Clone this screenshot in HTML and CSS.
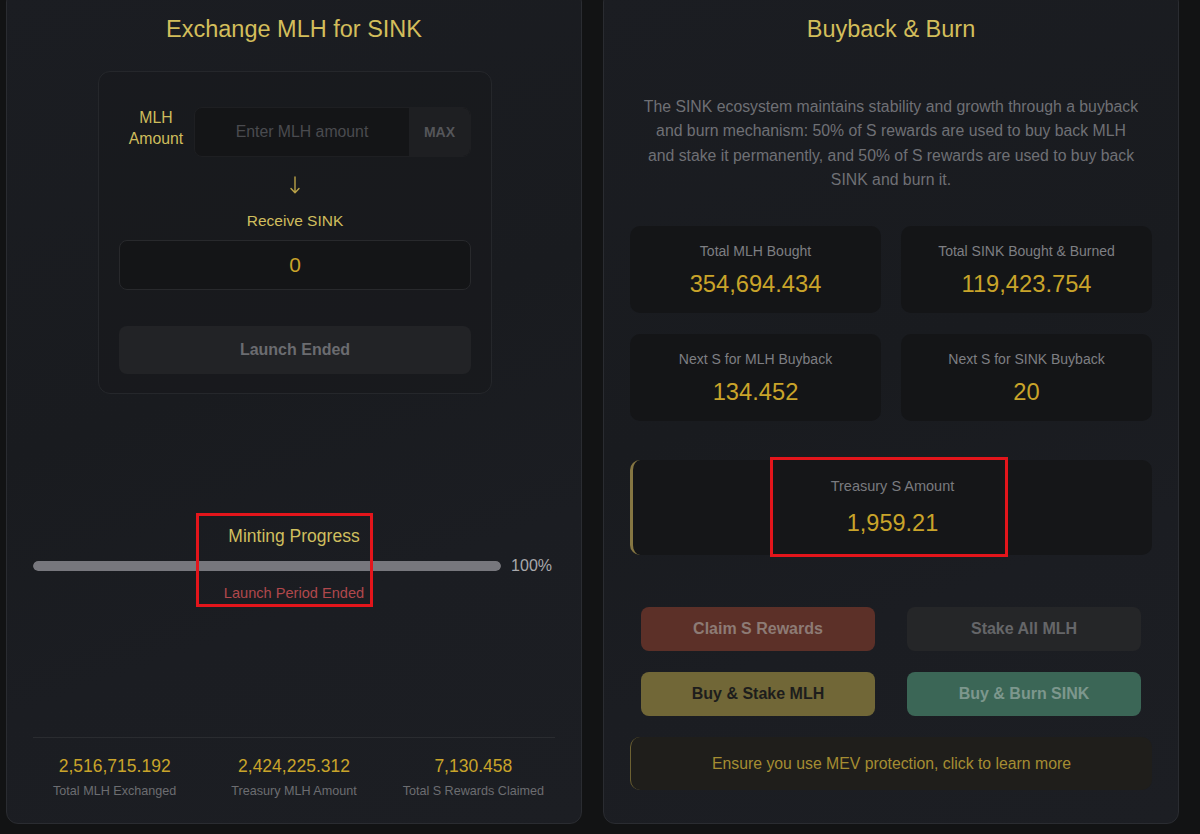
FILE: index.html
```html
<!DOCTYPE html>
<html lang="en">
<head>
<meta charset="utf-8">
<title>SINK</title>
<link rel="stylesheet" href="styles.css">
</head>
<body>
<div class="page">
  <section class="panel">
    <h2 class="title">Exchange MLH for SINK</h2>
    <div class="swap-box">
      <div class="input-row">
        <label class="amount-label" for="mlh">MLH Amount</label>
        <div class="input-wrap">
          <input id="mlh" class="amount-input" type="text" placeholder="Enter MLH amount">
          <button class="max-btn">MAX</button>
        </div>
      </div>
      <div class="arrow" aria-label="down">
        <svg width="12" height="18" viewBox="0 0 12 18"><path d="M6 1 V16.5 M2 12.5 L6 16.8 L10 12.5" fill="none" stroke="#b9a248" stroke-width="1.4" stroke-linecap="round" stroke-linejoin="round"/></svg>
      </div>
      <div class="receive-label">Receive SINK</div>
      <div class="output-box">0</div>
      <button class="launch-btn">Launch Ended</button>
    </div>
    <div class="progress">
      <div class="progress-title">Minting Progress</div>
      <div class="bar-row">
        <div class="bar"><div class="bar-fill" style="width:100%"></div></div>
        <span class="pct">100%</span>
      </div>
      <div class="progress-status">Launch Period Ended</div>
    </div>
    <div class="stats">
      <div class="stats-grid">
        <div class="stat">
          <div class="stat-value">2,516,715.192</div>
          <div class="stat-label">Total MLH Exchanged</div>
        </div>
        <div class="stat">
          <div class="stat-value">2,424,225.312</div>
          <div class="stat-label">Treasury MLH Amount</div>
        </div>
        <div class="stat">
          <div class="stat-value">7,130.458</div>
          <div class="stat-label">Total S Rewards Claimed</div>
        </div>
      </div>
    </div>
  </section>

  <section class="panel">
    <h2 class="title">Buyback &amp; Burn</h2>
    <p class="desc">The SINK ecosystem maintains stability and growth through a buyback and burn mechanism: 50% of S rewards are used to buy back MLH and stake it permanently, and 50% of S rewards are used to buy back SINK and burn it.</p>
    <div class="cards">
      <div class="card">
        <div class="card-label">Total MLH Bought</div>
        <div class="card-value">354,694.434</div>
      </div>
      <div class="card">
        <div class="card-label">Total SINK Bought &amp; Burned</div>
        <div class="card-value">119,423.754</div>
      </div>
      <div class="card">
        <div class="card-label">Next S for MLH Buyback</div>
        <div class="card-value">134.452</div>
      </div>
      <div class="card">
        <div class="card-label">Next S for SINK Buyback</div>
        <div class="card-value">20</div>
      </div>
    </div>
    <div class="treasury">
      <div class="treasury-label">Treasury S Amount</div>
      <div class="treasury-value">1,959.21</div>
    </div>
    <div class="actions">
      <button class="act act-claim">Claim S Rewards</button>
      <button class="act act-stake">Stake All MLH</button>
      <button class="act act-buy">Buy &amp; Stake MLH</button>
      <button class="act act-burn">Buy &amp; Burn SINK</button>
    </div>
    <div class="mev">Ensure you use MEV protection, click to learn more</div>
  </section>
</div>
<div class="annot annot-1"></div>
<div class="annot annot-2"></div>
</body>
</html>
```

FILE: styles.css
```css
html, body {
  margin: 0;
  padding: 0;
}

body {
  background: #121314;
  font-family: "Liberation Sans", Arial, sans-serif;
  overflow: hidden;
  position: relative;
  height: 834px;
}

.page {
  display: grid;
  grid-template-columns: 1fr 1fr;
  gap: 21px;
  padding: 0 21px 0 6px;
  height: 834px;
  margin-top: -10px;
  box-sizing: border-box;
}

.panel {
  background: linear-gradient(160deg, #1b1d22 0%, #191b1f 45%, #1b1d22 70%, #1c1e23 100%);
  border: 1px solid #2a2c31;
  border-radius: 12px;
  padding: 23px 26px 23px;
  display: flex;
  flex-direction: column;
  box-sizing: border-box;
  min-width: 0;
}

.title {
  margin: 0;
  text-align: center;
  font-size: 23.5px;
  line-height: 30px;
  font-weight: normal;
  color: #d3be5b;
}

/* ---------- swap box ---------- */
.swap-box {
  width: 394px;
  margin: 27px auto 0;
  box-sizing: border-box;
  padding: 35px 20px 19px;
  border: 1px solid #25272b;
  border-radius: 12px;
  background: rgba(22, 23, 26, 0.35);
  display: flex;
  flex-direction: column;
  position: relative;
  left: 1px;
}

.input-row {
  display: flex;
  align-items: flex-start;
  gap: 1px;
}

.amount-label {
  width: 74px;
  flex: none;
  text-align: center;
  font-size: 15.8px;
  line-height: 21px;
  color: #cfbd5c;
}

.input-wrap {
  flex: 1;
  height: 50px;
  display: flex;
  background: #141517;
  border: 1px solid #1e1f22;
  border-radius: 8px;
  overflow: hidden;
  box-sizing: border-box;
}

.amount-input {
  flex: 1;
  min-width: 0;
  background: transparent;
  border: none;
  outline: none;
  text-align: center;
  font-family: "Liberation Sans", Arial, sans-serif;
  font-size: 15.8px;
  color: #cfbd5c;
  padding: 0;
}

.amount-input::placeholder {
  color: #4a4b4f;
}

.max-btn {
  width: 61px;
  flex: none;
  background: #1e1f22;
  border: none;
  color: #55565a;
  font-family: "Liberation Sans", Arial, sans-serif;
  font-weight: bold;
  font-size: 14px;
  padding: 0;
}

.arrow {
  margin-top: 16px;
  height: 24px;
  display: flex;
  align-items: center;
  justify-content: center;
}

.arrow svg {
  display: block;
}

.receive-label {
  margin-top: 14px;
  text-align: center;
  font-size: 15.5px;
  line-height: 20px;
  color: #d0be5d;
}

.output-box {
  margin-top: 9px;
  height: 50px;
  box-sizing: border-box;
  border: 1px solid #28292c;
  background: #141517;
  border-radius: 8px;
  display: flex;
  align-items: center;
  justify-content: center;
  font-size: 21px;
  color: #c9a42a;
}

.launch-btn {
  margin-top: 36px;
  height: 48px;
  width: 100%;
  background: #222326;
  border: none;
  border-radius: 8px;
  color: #6b6c70;
  font-family: "Liberation Sans", Arial, sans-serif;
  font-weight: bold;
  font-size: 16px;
}

/* ---------- progress ---------- */
.progress {
  margin-top: 130px;
}

.progress-title {
  text-align: center;
  font-size: 17.5px;
  line-height: 24px;
  color: #d0bf5e;
}

.bar-row {
  margin-top: 8px;
  height: 20px;
  display: flex;
  align-items: center;
  gap: 10px;
  padding-right: 3px;
}

.bar {
  flex: 1;
  height: 10px;
  border-radius: 5px;
  background: #2a2b2f;
  overflow: hidden;
}

.bar-fill {
  height: 100%;
  background: #77777d;
  border-radius: 5px;
}

.pct {
  font-size: 16px;
  color: #a8a8ac;
}

.progress-status {
  margin-top: 7px;
  text-align: center;
  font-size: 14.6px;
  line-height: 20px;
  color: #b0484c;
}

/* ---------- stats ---------- */
.stats {
  margin-top: auto;
  border-top: 1px solid #2a2c30;
  padding-top: 16px;
}

.stats-grid {
  display: grid;
  grid-template-columns: 1fr 1fr 1fr;
  column-gap: 8px;
  margin: 0 -4px;
  text-align: center;
}

.stat-value {
  font-size: 17.5px;
  line-height: 24px;
  color: #c9a42a;
}

.stat-label {
  margin-top: 4px;
  font-size: 12.6px;
  line-height: 18px;
  color: #6c6d71;
}

/* ---------- right panel ---------- */
.desc {
  margin: 51px auto 0;
  max-width: 497px;
  text-align: center;
  font-size: 15.8px;
  line-height: 24.3px;
  color: #6f7075;
}

.cards {
  margin-top: 34px;
  display: grid;
  grid-template-columns: 1fr 1fr;
  gap: 21px 20px;
}

.card {
  background: #141517;
  border-radius: 10px;
  padding: 15px 10px 14px;
  text-align: center;
}

.card-label {
  font-size: 14px;
  line-height: 20px;
  color: #7e7f83;
}

.card-value {
  margin-top: 8px;
  font-size: 23.7px;
  line-height: 30px;
  color: #c9a42a;
}

.treasury {
  margin-top: 39px;
  background: #151618;
  border-radius: 10px;
  border-left: 3px solid #857642;
  padding: 16px 16px 17px;
  text-align: center;
}

.treasury-label {
  font-size: 14.5px;
  line-height: 20px;
  color: #7a7b7f;
}

.treasury-value {
  margin-top: 12px;
  font-size: 23.5px;
  line-height: 30px;
  color: #c9a42a;
}

.actions {
  margin-top: 52px;
  display: grid;
  grid-template-columns: 1fr 1fr;
  gap: 21px 32px;
  padding: 0 11px;
}

.act {
  height: 44px;
  border: none;
  border-radius: 8px;
  font-family: "Liberation Sans", Arial, sans-serif;
  font-weight: bold;
  font-size: 16px;
  padding: 0;
}

.act-claim {
  background: #5c3028;
  color: #8d7b75;
}

.act-stake {
  background: #252628;
  color: #656669;
}

.act-buy {
  background: #716737;
  color: #1d1d1c;
}

.act-burn {
  background: #3b6656;
  color: #7d978d;
}

.mev {
  margin-top: 21px;
  height: 53px;
  box-sizing: border-box;
  background: #1f1e1b;
  border-left: 1px solid #6d6132;
  border-radius: 10px;
  padding: 16px;
  text-align: center;
  font-size: 15.8px;
  line-height: 21px;
  color: #a58d32;
}

/* ---------- annotation marks over the screenshot ---------- */
.annot {
  position: absolute;
  border: 3px solid #e3151b;
  box-sizing: border-box;
  pointer-events: none;
}

.annot-1 {
  left: 196px;
  top: 513px;
  width: 177px;
  height: 94px;
}

.annot-2 {
  left: 770px;
  top: 457px;
  width: 238px;
  height: 100px;
}
```
